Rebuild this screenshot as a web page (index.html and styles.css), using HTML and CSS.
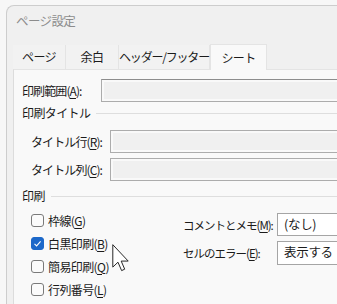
FILE: index.html
```html
<html lang="ja">

<head>
    <meta charset="UTF-8">
    <title>ページ設定</title>
    <link rel="stylesheet" href="styles.css">
</head>

<body>
    <div class="window">
        <div class="title">ページ設定</div>

        <div class="tabs">
            <div class="tab t1">ページ</div>
            <div class="tab t2">余白</div>
            <div class="tab t3">ヘッダー/フッター</div>
            <div class="tab active t4">シート</div>
        </div>

        <div class="panel">
            <div class="row first">
                <label class="lbl wide">印刷範囲(<u>A</u>):</label>
                <div class="field disabled dark"></div>
            </div>

            <div class="group g1">印刷タイトル</div>

            <div class="row sub r1">
                <label class="lbl">タイトル行(<u>R</u>):</label>
                <div class="field disabled"></div>
            </div>
            <div class="row sub r2">
                <label class="lbl">タイトル列(<u>C</u>):</label>
                <div class="field disabled"></div>
            </div>

            <div class="group g2">印刷</div>

            <div class="print">
                <div class="checks">
                    <div class="check"><span class="box"></span>枠線(<u>G</u>)</div>
                    <div class="check"><span class="box on">
                        <svg width="13" height="13" viewBox="0 0 13 13"><path d="M3.5 6.8 L5.6 8.9 L9.6 4.4" fill="none" stroke="#fff" stroke-width="1.1"/></svg>
                    </span>白黒印刷(<u>B</u>)</div>
                    <div class="check"><span class="box"></span>簡易印刷(<u>Q</u>)</div>
                    <div class="check"><span class="box"></span>行列番号(<u>L</u>)</div>
                </div>
                <div class="selects">
                    <div class="row sel1">
                        <label class="lbl opt">コメントとメモ(<u>M</u>):</label>
                        <div class="field">(なし)</div>
                    </div>
                    <div class="row sel2">
                        <label class="lbl opt">セルのエラー(<u>E</u>):</label>
                        <div class="field">表示する</div>
                    </div>
                </div>
            </div>
        </div>
    </div>

    <svg class="cursor" width="17" height="28" viewBox="0 0 12 20">
        <path d="M0.5 0.5 L0.5 16.5 L4.2 13 L6.8 19 L9 18 L6.5 12.2 L11.5 12.2 Z" fill="#fff" stroke="#222" stroke-width="0.7" stroke-linejoin="round"/>
    </svg>
</body>

</html>
```

FILE: styles.css
```css
body {
    margin: 0;
    width: 337px;
    height: 304px;
    overflow: hidden;
    background-color: #f7f7f7;
    font-family: "Noto Sans CJK JP", "Noto Sans", sans-serif;
    font-size: 12px;
    line-height: 16px;
    letter-spacing: -0.6px;
    white-space: nowrap;
    color: #1b1b1b;
    position: relative;
}

u {
    text-decoration-thickness: 1px;
    text-underline-offset: 2px;
}

.window {
    margin: 5px 0 0 6px;
    width: 420px;
    height: 298px;
    overflow: hidden;
    background-color: #f0f0f0;
    border-left: 1px solid #cdcdcd;
    border-top: 1px solid #cdcdcd;
    border-top-left-radius: 8px;
}

.title {
    height: 31px;
    padding-left: 9px;
    line-height: 30px;
    color: #8c8c8c;
    font-size: 12.5px;
}

.tabs {
    display: flex;
    height: 25px;
    padding-left: 6px;
    margin-top: 7px;
    align-items: flex-end;
}

.tab {
    height: 24px;
    line-height: 24px;
    text-align: center;
    background-color: #f2f2f2;
    border-right: 1px solid #e4e4e4;
    box-sizing: border-box;
}

.t1 { width: 53px; }
.t2 { width: 53px; }
.t3 { width: 91px; letter-spacing: -1.2px; }

.tab.active {
    width: 57px;
    height: 26px;
    line-height: 25px;
    background-color: #f9f9f9;
    border: 1px solid #e4e4e4;
    border-bottom: none;
    position: relative;
    top: 1px;
}

.panel {
    margin-left: 6px;
    height: 240px;
    background-color: #f9f9f9;
    border-left: 1px solid #dcdcdc;
    border-top: 1px solid #e4e4e4;
    padding-left: 8px;
}

.row {
    display: flex;
    align-items: center;
}

.row.first {
    padding-top: 9px;
}

.lbl {
    width: 79px;
    flex-shrink: 0;
    letter-spacing: -0.9px;
}

.row.sub {
    padding-left: 9px;
}

.r1 { margin-top: 6px; }
.r2 { margin-top: 5px; }

.field {
    flex: 1;
    height: 23px;
    box-sizing: border-box;
    border: 1px solid #a5a5a5;
    background-color: #fff;
    padding-left: 6px;
    line-height: 20px;
    font-size: 12.5px;
    letter-spacing: -0.3px;
}

.field.disabled {
    background-color: #f0f0f0;
    border: 1px solid #acacac;
    box-shadow: inset 0 0 0 2px #f9f9f9;
}

.field.dark {
    border-top-color: #8d8d8d;
}

.group {
    display: flex;
    align-items: center;
    height: 22px;
}

.g2 {
    margin-top: 4px;
}

.group::after {
    content: "";
    flex: 1;
    height: 1px;
    background-color: #dedede;
    margin-left: 6px;
}

.print {
    display: flex;
    padding-left: 9px;
}

.checks {
    width: 152px;
    flex-shrink: 0;
    padding-top: 2px;
}

.check {
    display: flex;
    align-items: center;
    height: 23px;
}

.box {
    width: 13px;
    height: 13px;
    box-sizing: border-box;
    border: 1px solid #7a7a7a;
    border-radius: 3px;
    background-color: #fbfbfb;
    margin-right: 4px;
    display: inline-flex;
}

.box.on {
    background-color: #1c68c9;
    border-color: #1c68c9;
}

.box.on svg {
    margin: -1px;
}

.selects {
    flex: 1;
    padding-top: 6px;
}

.lbl.opt {
    width: 94px;
    font-size: 11.5px;
    letter-spacing: -1px;
}

.sel2 {
    margin-top: 5px;
}

.sel2 .field {
    height: 24px;
}

.cursor {
    position: absolute;
    left: 112px;
    top: 244px;
}
```
